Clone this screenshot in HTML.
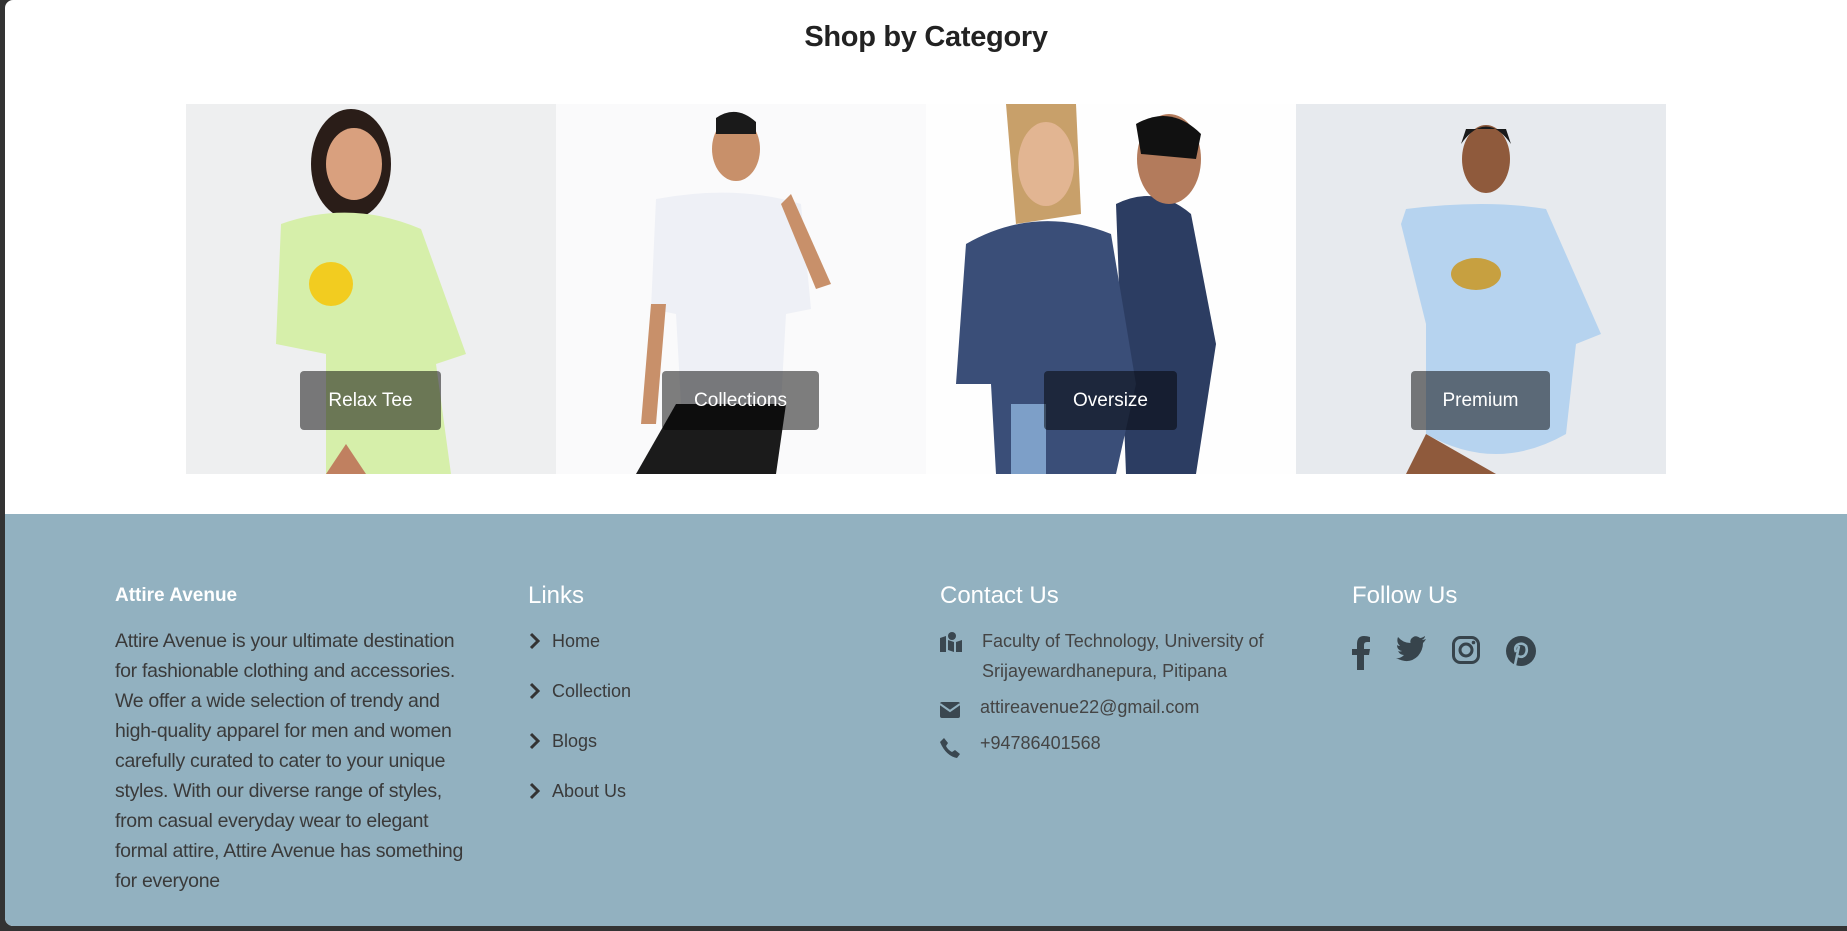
<!DOCTYPE html>
<html><head><meta charset="utf-8"><style>
*{margin:0;padding:0;box-sizing:border-box}
html,body{width:1847px;height:931px;overflow:hidden;background:#333;font-family:"Liberation Sans",sans-serif}
.page{position:absolute;left:5px;top:0;width:1842px;height:926px;background:#fff;border-radius:8px 0 0 8px;overflow:hidden}
h2{position:absolute;left:0;width:1842px;top:21px;text-align:center;font-size:29px;font-weight:bold;color:#222;letter-spacing:-0.3px}
.cat{position:absolute;top:104px;width:370px;height:370px;overflow:hidden}
.badge{position:absolute;top:371px;height:59px;background:rgba(0,0,0,.5);border-radius:4px;color:#fff;font-size:19px;text-align:center;line-height:60px}
.foot{position:absolute;left:0;top:514px;width:1842px;height:412px;background:#92b1c0}
.col{position:absolute;top:62px;color:#3a3a3a;font-size:18px}
.col h3{font-size:24px;font-weight:normal;color:#fff;height:50px;line-height:40px;margin-bottom:0}
.col h4{font-size:19px;font-weight:bold;color:#fff;height:50px;line-height:40px}
.col p{line-height:30px;white-space:nowrap;font-size:19.5px;letter-spacing:-0.3px}
.li{height:50px;line-height:30px;display:flex;align-items:center;gap:10px}
.links{margin-top:-10px}
.li svg{width:14px;height:18px}
.ct{display:flex;gap:20px;line-height:30px;color:#444;margin-bottom:10px;white-space:nowrap}
.ct svg{flex:none;margin-top:6px}
.soc{display:flex;gap:26px;margin-top:10px}
</style></head><body><div class="page">
<h2>Shop by Category</h2>

<div class="cat" style="left:181px;background:#eeeff0">
<svg width="370" height="370"><ellipse cx="165" cy="60" rx="40" ry="55" fill="#2a1d18"/><ellipse cx="168" cy="60" rx="28" ry="36" fill="#d9a07e"/><path d="M95 120 Q165 95 235 125 L280 250 L250 260 L265 370 L140 370 L140 250 L90 240 Z" fill="#d6efaa"/><circle cx="145" cy="180" r="22" fill="#f2cc20"/><path d="M140 370 L160 340 L180 370Z" fill="#c08060"/></svg>
</div>
<div class="cat" style="left:551px;background:#fafafb">
<svg width="370" height="370"><ellipse cx="180" cy="45" rx="24" ry="32" fill="#c8906a"/><path d="M160 14 Q180 0 200 18 L200 30 L160 30Z" fill="#1a1a1a"/><path d="M100 95 Q180 80 245 100 L255 205 L230 210 L225 300 L125 300 L120 210 L95 205Z" fill="#eef0f6"/><path d="M95 200 L110 200 L100 320 L85 320Z" fill="#c8906a"/><path d="M235 90 L275 180 L260 185 L225 100Z" fill="#c8906a"/><path d="M120 300 L230 300 L220 370 L80 370Z" fill="#1b1b1b"/></svg>
</div>
<div class="cat" style="left:921px;background:#fefefe">
<svg width="370" height="370"><path d="M190 100 Q230 80 265 110 L290 240 L270 370 L200 370Z" fill="#2c3d62"/><ellipse cx="243" cy="55" rx="32" ry="45" fill="#b37b5c"/><path d="M210 20 Q245 0 275 30 L270 55 L215 50Z" fill="#111"/><path d="M80 0 L150 0 L155 110 L90 120Z" fill="#c8a06a"/><ellipse cx="120" cy="60" rx="28" ry="42" fill="#e2b592"/><path d="M40 140 Q110 100 185 130 L210 280 L190 370 L70 370 L65 280 L30 280Z" fill="#3a4e78"/><path d="M85 300 L120 300 L120 370 L85 370Z" fill="#7d9fc8"/></svg>
</div>
<div class="cat" style="left:1291px;background:#e7eaee">
<svg width="370" height="370"><ellipse cx="190" cy="55" rx="24" ry="34" fill="#8f5a3c"/><path d="M165 40 Q190 5 215 40 L210 25 L170 25Z" fill="#1a1a1a"/><path d="M110 105 Q190 95 250 105 L305 230 L280 240 L270 330 Q200 370 130 330 L130 220 L105 120Z" fill="#b6d3ef"/><ellipse cx="180" cy="170" rx="25" ry="16" fill="#c7a040"/><path d="M130 330 L200 370 L110 370Z" fill="#8f5a3c"/></svg>
</div>
<div class="badge" style="left:295px;width:141px">Relax Tee</div>
<div class="badge" style="left:657px;width:157px">Collections</div>
<div class="badge" style="left:1039px;width:133px">Oversize</div>
<div class="badge" style="left:1406px;width:139px">Premium</div>

<div class="foot">
<div class="col" style="left:110px"><h4>Attire Avenue</h4><p>Attire Avenue is your ultimate destination<br>for fashionable clothing and accessories.<br>We offer a wide selection of trendy and<br>high-quality apparel for men and women<br>carefully curated to cater to your unique<br>styles. With our diverse range of styles,<br>from casual everyday wear to elegant<br>formal attire, Attire Avenue has something<br>for everyone</p></div>
<div class="col" style="left:523px"><h3>Links</h3><div class="links">
<div class="li"><svg viewBox="0 0 14 18"><path d="M3 2 L10 9 L3 16" stroke="#333" stroke-width="3" fill="none"/></svg>Home</div>
<div class="li"><svg viewBox="0 0 14 18"><path d="M3 2 L10 9 L3 16" stroke="#333" stroke-width="3" fill="none"/></svg>Collection</div>
<div class="li"><svg viewBox="0 0 14 18"><path d="M3 2 L10 9 L3 16" stroke="#333" stroke-width="3" fill="none"/></svg>Blogs</div>
<div class="li"><svg viewBox="0 0 14 18"><path d="M3 2 L10 9 L3 16" stroke="#333" stroke-width="3" fill="none"/></svg>About Us</div>
</div></div>
<div class="col" style="left:935px"><h3>Contact Us</h3>
<div class="ct"><svg width="22" height="20" viewBox="0 0 22 20"><path d="M0 6 L6 4 L6 20 L0 20Z M8 8 L14 10 L14 20 L8 18Z M16 10 L22 8 L22 20 L16 20Z" fill="#3a4750"/><circle cx="12" cy="4" r="4" fill="#3a4750"/></svg><div>Faculty of Technology, University of<br>Srijayewardhanepura, Pitipana</div></div>
<div class="ct"><svg width="20" height="16" viewBox="0 0 20 16"><rect x="0" y="0" width="20" height="16" rx="2" fill="#3a4750"/><path d="M0 2 L10 9 L20 2" stroke="#92b1c0" stroke-width="2" fill="none"/></svg><div style="margin-top:-4px">attireavenue22@gmail.com</div></div>
<div class="ct"><svg width="20" height="20" viewBox="0 0 20 20"><path d="M4 0 L8 5 L6 8 Q8 12 12 14 L15 12 L20 16 L17 20 Q6 18 0 4Z" fill="#3a4750"/></svg><div style="margin-top:-4px">+94786401568</div></div>
</div>
<div class="col" style="left:1347px"><h3>Follow Us</h3>
<div class="soc">
<svg width="18" height="34" viewBox="0 0 18 34"><path d="M12 34 V19 H17 L18 13 H12 V9 Q12 6 15 6 H18 V1 Q15 0 12 0 Q5 0 5 8 V13 H0 V19 H5 V34Z" fill="#37444c"/></svg>
<svg width="30" height="26" viewBox="0 0 30 26"><path d="M30 3 Q27 4 26 4 Q29 2 29 0 Q26 2 24 2 Q19 -2 15 3 Q14 5 14.5 7 Q7 7 2 1 Q0 6 4 10 Q2 10 1 9 Q1 14 6 15 Q4 16 2 15 Q4 19 8 19 Q4 23 0 22 Q13 29 22 20 Q27 14 27 7 Q29 5 30 3Z" fill="#37444c"/></svg>
<svg width="28" height="28" viewBox="0 0 28 28"><rect x="1.5" y="1.5" width="25" height="25" rx="7" stroke="#37444c" stroke-width="3" fill="none"/><circle cx="14" cy="14" r="6" stroke="#37444c" stroke-width="3" fill="none"/><circle cx="21.5" cy="6.5" r="1.8" fill="#37444c"/></svg>
<svg width="30" height="30" viewBox="0 0 30 30"><circle cx="15" cy="15" r="15" fill="#37444c"/><path d="M13 10 L9 29 M12 20 Q16 22 19 19 Q22 15 20 10 Q16 6 11 9 Q8 12 10 16" stroke="#92b1c0" stroke-width="2.6" fill="none"/></svg>
</div></div>
</div>
</div></body></html>
